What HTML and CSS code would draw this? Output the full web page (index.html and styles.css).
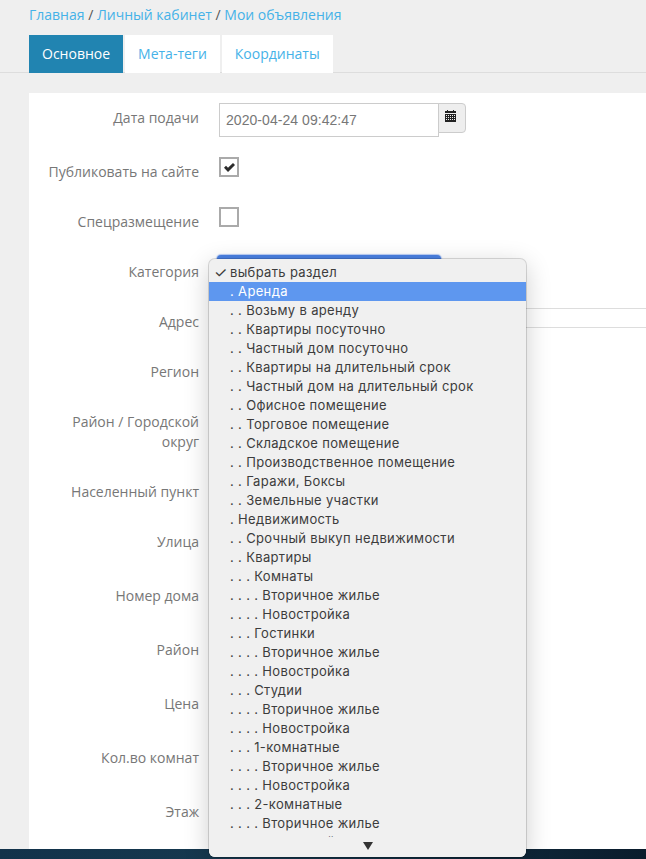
FILE: index.html
```html
<!DOCTYPE html>
<html lang="ru">
<head>
<meta charset="utf-8">
<title>Мои объявления</title>
<link rel="stylesheet" href="styles.css">
</head>
<body>
<div class="page">
  <nav class="crumbs"><a>Главная</a> / <a>Личный кабинет</a> / <a>Мои объявления</a></nav>
  <div class="tabs">
    <a class="tab tab-active">Основное</a>
    <a class="tab">Мета-теги</a>
    <a class="tab">Координаты</a>
  </div>
  <form class="panel">
    <div class="row">
      <label class="lbl">Дата подачи</label>
      <div class="date-group">
        <span class="date-input">2020-04-24 09:42:47</span>
        <span class="date-btn">
          <svg class="cal" viewBox="0 0 11 12" width="11" height="12"><path d="M2 0h1v1h5V0h1v1h2v2H0V1h2z" fill="#222"/><path fill-rule="evenodd" d="M0 4h11v8H0zM1 5v1h1V5zm2 0v1h1V5zm2 0v1h1V5zm2 0v1h1V5zm2 0v1h1V5zM1 7v1h1V7zm2 0v1h1V7zm2 0v1h1V7zm2 0v1h1V7zm2 0v1h1V7zM1 9v1h1V9zm2 0v1h1V9zm2 0v1h1V9zm2 0v1h1V9zm2 0v1h1V9z" fill="#222"/></svg>
        </span>
      </div>
    </div>
    <div class="row row-sm">
      <label class="lbl">Публиковать на сайте</label>
      <span class="check">
        <svg viewBox="0 0 11 9" width="11" height="9"><path d="M0 4.8l2-2 2 2L9 0l2 2-7 7z" fill="#2b2b2b"/></svg>
      </span>
    </div>
    <div class="row row-sm">
      <label class="lbl">Спецразмещение</label>
      <span class="check"></span>
    </div>
    <div class="row row-sm">
      <label class="lbl">Категория</label>
      <span class="select-focus"></span>
    </div>
    <div class="row row-sm">
      <label class="lbl">Адрес</label>
      <span class="text-input"></span>
    </div>
    <div class="row row-sm"><label class="lbl">Регион</label></div>
    <div class="row row-tall"><label class="lbl">Район / Городской округ</label></div>
    <div class="row row-sm"><label class="lbl">Населенный пункт</label></div>
    <div class="row"><label class="lbl">Улица</label></div>
    <div class="row"><label class="lbl">Номер дома</label></div>
    <div class="row"><label class="lbl">Район</label></div>
    <div class="row"><label class="lbl">Цена</label></div>
    <div class="row"><label class="lbl">Кол.во комнат</label></div>
    <div class="row"><label class="lbl">Этаж</label></div>
  </form>
  <div class="footer-strip"></div>
</div>
<div class="menu">
  <div class="opt"><span class="tick">✓</span>выбрать раздел</div>
  <div class="opt opt-hot">. Аренда</div>
  <div class="opt">. . Возьму в аренду</div>
  <div class="opt">. . Квартиры посуточно</div>
  <div class="opt">. . Частный дом посуточно</div>
  <div class="opt">. . Квартиры на длительный срок</div>
  <div class="opt">. . Частный дом на длительный срок</div>
  <div class="opt">. . Офисное помещение</div>
  <div class="opt">. . Торговое помещение</div>
  <div class="opt">. . Складское помещение</div>
  <div class="opt">. . Производственное помещение</div>
  <div class="opt">. . Гаражи, Боксы</div>
  <div class="opt">. . Земельные участки</div>
  <div class="opt">. Недвижимость</div>
  <div class="opt">. . Срочный выкуп недвижимости</div>
  <div class="opt">. . Квартиры</div>
  <div class="opt">. . . Комнаты</div>
  <div class="opt">. . . . Вторичное жилье</div>
  <div class="opt">. . . . Новостройка</div>
  <div class="opt">. . . Гостинки</div>
  <div class="opt">. . . . Вторичное жилье</div>
  <div class="opt">. . . . Новостройка</div>
  <div class="opt">. . . Студии</div>
  <div class="opt">. . . . Вторичное жилье</div>
  <div class="opt">. . . . Новостройка</div>
  <div class="opt">. . . 1-комнатные</div>
  <div class="opt">. . . . Вторичное жилье</div>
  <div class="opt">. . . . Новостройка</div>
  <div class="opt">. . . 2-комнатные</div>
  <div class="opt">. . . . Вторичное жилье</div>
  <div class="opt">. . . . Новостройка</div>
  <div class="menu-foot"><svg viewBox="0 0 10 8" width="10" height="8"><path d="M0 0h10L5 8z" fill="#333"/></svg></div>
</div>
</body>
</html>
```
FILE: styles.css
```css
* { box-sizing: border-box; }
html, body { margin: 0; height: 859px; overflow: hidden; }
body { background: #efefef; font-family: "Open Sans", sans-serif; font-size: 14px; color: #777; position: relative; }
.page { height: 859px; padding-top: 5px; display: flex; flex-direction: column; overflow: hidden; }
.crumbs { height: 30px; padding-left: 29px; line-height: 20px; color: #555; }
.crumbs a { color: #45b2e8; }
.tabs { display: flex; gap: 2px; height: 38px; padding-left: 29px; border-bottom: 1px solid #ddd; }
.tab { height: 38px; padding: 0 13px; line-height: 38px; background: #fff; color: #45b2e8; }
.tab-active { background: #2184b1; color: #fff; }
.panel { flex: 1; margin: 20px 0 0 29px; padding-top: 10px; background: #fff; overflow: hidden; }
.row { display: flex; height: 34px; margin-bottom: 20px; }
.row-sm { height: 30px; }
.row-tall { height: 50px; }
.lbl { width: 170px; flex: none; padding: 5px 0 0 19px; line-height: 20px; text-align: right; }
.date-group { display: flex; align-items: flex-start; margin-left: 20px; }
.date-input { width: 220px; height: 34px; border: 1px solid #ccc; padding: 0 6px; line-height: 33px; font-family: "Liberation Sans", sans-serif; font-size: 14px; letter-spacing: .05px; color: #777; }
.date-btn { width: 28px; height: 30px; margin-left: -1px; border: 1px solid #ccc; border-radius: 0 4px 4px 0; background: #eee; padding: 6px 0 0 6px; }
.cal { display: block; }
.check { width: 20px; height: 20px; margin-left: 20px; border: 2px solid #aaa; display: flex; align-items: center; justify-content: center; }
.select-focus { width: 224px; height: 30px; margin: -2px 0 0 18px; background: #4a80e2; border-radius: 4px; box-shadow: 0 0 1px 1px rgba(90,140,235,.45); }
.text-input { flex: 1; height: 20px; margin: 1px 0 0 20px; border: 1px solid #ddd; border-right: 0; }
.footer-strip { height: 10px; flex: none; background: linear-gradient(90deg, #12324a, #173a50 40%, #0a1c2c); }
.menu { position: absolute; left: 209px; top: 259px; width: 317px; height: 598px; padding-top: 4px; background: #f0f0f0; border-radius: 6px; box-shadow: 0 0 0 1px rgba(0,0,0,.14), 0 6px 26px rgba(0,0,0,.2); font-family: Inter, Roboto, sans-serif; font-size: 13px; letter-spacing: .34px; color: #3c3c3c; overflow: hidden; }
.opt { position: relative; height: 19px; line-height: 19px; padding-left: 21px; white-space: nowrap; }
.opt-hot { background: #5e97ef; color: #fff; }
.tick { position: absolute; left: 5px; font-size: 15px; }
.menu-foot { position: absolute; left: 0; right: 0; bottom: 0; height: 20px; background: #f0f0f0; display: flex; justify-content: center; padding-top: 5px; }
.menu-foot svg { display: block; }
```
